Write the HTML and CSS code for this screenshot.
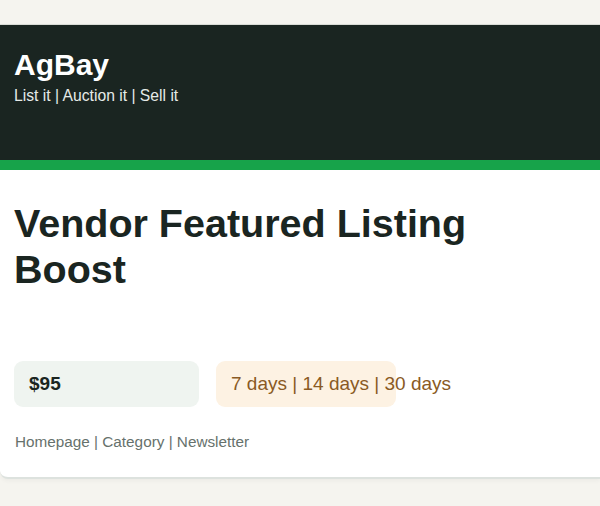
FILE: index.html
```html
<!DOCTYPE html>
<html lang="en">
<head>
    <meta charset="UTF-8">
    <meta name="viewport" content="width=device-width, initial-scale=1.0">
    <title>AgBay - Vendor Featured Listing Boost</title>
    <link rel="stylesheet" href="styles.css">
</head>
<body>
    <div class="card">
        <!-- Brand header -->
        <header class="brand">
            <h1 class="logo">AgBay</h1>
            <p class="tagline">List it | Auction it | Sell it</p>
        </header>

        <div class="content">
            <h2 class="title">Vendor Featured Listing Boost</h2>

            <div class="details">
                <div class="price">$95</div>
                <div class="duration">7 days | 14 days | 30 days</div>
            </div>

            <p class="placements">Homepage | Category | Newsletter</p>
        </div>
    </div>
</body>
</html>
```

FILE: styles.css
```css
/* Page */
body {
    margin: 0;
    padding: 24px 0;
    background-color: #f5f4ef;
    font-family: "Liberation Sans", Arial, sans-serif;
    color: #1a2521;
}

/* card runs past the window edges in the design */
.card {
    width: 100%;
    box-sizing: border-box;
    background-color: #ffffff;
    border-top: 1px solid #d9dcd6;
    border-bottom: 2px solid #dde2de;
    border-radius: 0 0 0 8px;
    box-shadow: 0 2px 4px rgba(0, 0, 0, 0.04);
}

/* Header */
.brand {
    background-color: #1a2521;
    padding: 23px 14px 54px;
    border-bottom: 10px solid #17a34a;
}

.logo {
    margin: 0;
    font-size: 30px;
    line-height: 34px;
    font-weight: bold;
    color: #ffffff;
}

.tagline {
    margin: 4px 0 0;
    font-size: 15.7px;
    line-height: 20px;
    color: #e6ebe8;
}

/* Body */
.content {
    padding: 30px 14px 25px;
}

.title {
    max-width: 520px;
    margin: 0 0 69px;
    font-size: 39.5px;
    line-height: 46px;
    font-weight: bold;
    color: #1a2521;
}

.details {
    display: flex;
    gap: 17px;
}

.price, .duration {
    padding: 12px 15px;
    font-size: 19px;
    line-height: 22px;
    border-radius: 9px;
    white-space: nowrap;
    box-sizing: border-box;
}

.price {
    width: 185px;
    background-color: #eff4f0;
    font-weight: bold;
    color: #1a2521;
}

.duration {
    width: 180px;
    background-color: #fdf2e3;
    color: #8a5a24;
}

.placements {
    margin: 25px 0 0;
    padding-left: 1px;
    font-size: 15.3px;
    line-height: 20px;
    color: #66716c;
}
```
